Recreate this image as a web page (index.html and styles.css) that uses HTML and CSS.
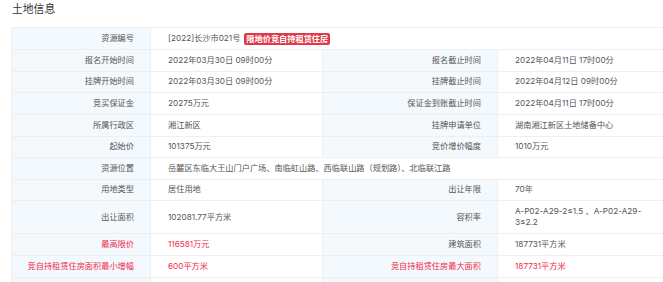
FILE: index.html
```html
<!DOCTYPE html>
<html lang="zh-CN">
<head>
<meta charset="utf-8">
<title>土地信息</title>
<link rel="stylesheet" href="styles.css">
</head>
<body>
<div class="page">
  <h2 class="title">土地信息</h2>
  <table class="info">
    <colgroup>
      <col class="c-label"><col class="c-value"><col class="c-label2"><col class="c-value2">
    </colgroup>
    <tr>
      <td class="lbl">资源编号</td>
      <td class="val" colspan="3">[2022]长沙市021号<span class="badge">限地价竞自持租赁住房</span></td>
    </tr>
    <tr>
      <td class="lbl">报名开始时间</td><td class="val">2022年03月30日 09时00分</td>
      <td class="lbl">报名截止时间</td><td class="val">2022年04月11日 17时00分</td>
    </tr>
    <tr>
      <td class="lbl">挂牌开始时间</td><td class="val">2022年03月30日 09时00分</td>
      <td class="lbl">挂牌截止时间</td><td class="val">2022年04月12日 09时00分</td>
    </tr>
    <tr>
      <td class="lbl">竞买保证金</td><td class="val">20275万元</td>
      <td class="lbl">保证金到账截止时间</td><td class="val">2022年04月11日 17时00分</td>
    </tr>
    <tr>
      <td class="lbl">所属行政区</td><td class="val">湘江新区</td>
      <td class="lbl">挂牌申请单位</td><td class="val">湖南湘江新区土地储备中心</td>
    </tr>
    <tr>
      <td class="lbl">起始价</td><td class="val">101375万元</td>
      <td class="lbl">竞价增价幅度</td><td class="val">1010万元</td>
    </tr>
    <tr>
      <td class="lbl">资源位置</td>
      <td class="val" colspan="3">岳麓区东临大王山门户广场、南临虹山路、西临联山路（规划路）、北临联江路</td>
    </tr>
    <tr>
      <td class="lbl">用地类型</td><td class="val">居住用地</td>
      <td class="lbl">出让年限</td><td class="val">70年</td>
    </tr>
    <tr>
      <td class="lbl">出让面积</td><td class="val">102081.77平方米</td>
      <td class="lbl">容积率</td><td class="val">A-P02-A29-2≤1.5 、A-P02-A29-3≤2.2</td>
    </tr>
    <tr>
      <td class="lbl red">最高限价</td><td class="val red">116581万元</td>
      <td class="lbl">建筑面积</td><td class="val">187731平方米</td>
    </tr>
    <tr>
      <td class="lbl red">竞自持租赁住房面积最小增幅</td><td class="val red">600平方米</td>
      <td class="lbl red">竞自持租赁住房最大面积</td><td class="val red">187731平方米</td>
    </tr>
    <tr>
      <td class="lbl">&nbsp;</td><td class="val"></td>
      <td class="lbl"></td><td class="val"></td>
    </tr>
  </table>
</div>
</body>
</html>
```

FILE: styles.css
```css
html, body {
  margin: 0;
  padding: 0;
  background: #ffffff;
  overflow: hidden;
}
.page {
  padding: 0 0 0 11px;
  font-family: "Inter", "Noto Sans CJK SC", sans-serif;
  color: #555;
}
.title {
  margin: 0 0 11px 1px;
  font-size: 10.8px;
  line-height: 16px;
  font-weight: normal;
  color: #333;
  font-family: "Noto Sans CJK SC", sans-serif;
}
.info {
  border-collapse: collapse;
  table-layout: fixed;
  width: 661px;
  font-size: 8.2px;
  line-height: 11.4px;
}
.c-label { width: 139px; }
.c-value { width: 172px; }
.c-label2 { width: 175px; }
.c-value2 { width: 175px; }
.info td {
  border: 1px solid #edf0f3;
  padding: 4.6px 17px;
  vertical-align: middle;
}
.info td.lbl {
  background: #f3f9fd;
  text-align: right;
  padding-left: 4px;
  padding-right: 16px;
  color: #555;
}
.info td.val {
  background: #ffffff;
  text-align: left;
  color: #555;
}
.info td.red {
  color: #f2294b;
}
.badge {
  display: inline-block;
  margin-left: 4px;
  padding: 0 2px;
  background: #e03a48;
  color: #fff;
  border-radius: 2px;
  line-height: 12px;
  font-weight: bold;
  vertical-align: middle;
}
```
